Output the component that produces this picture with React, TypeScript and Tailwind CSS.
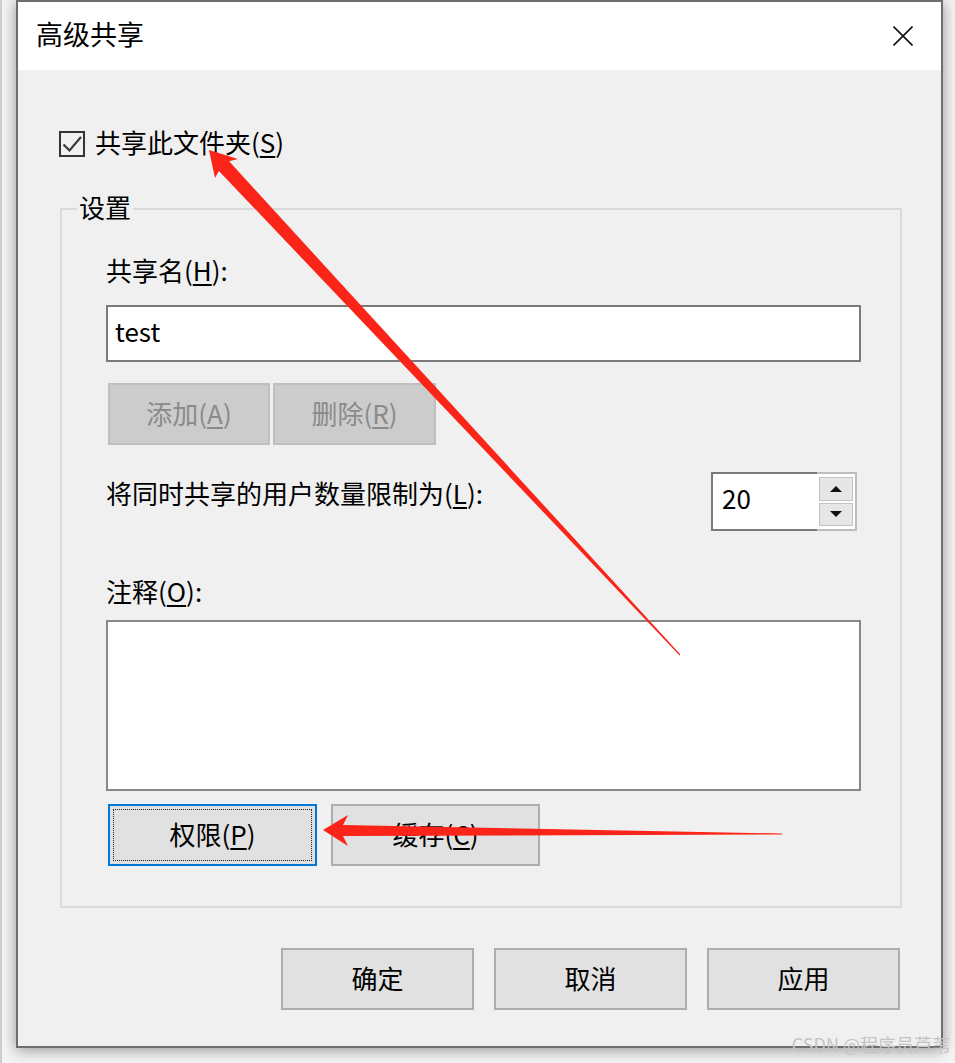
import React from 'react';

const Key: React.FC<{ k: string }> = ({ k }) => (
  <span className="underline underline-offset-[3px] decoration-[1.5px]">{k}</span>
);

const Button: React.FC<{ children: React.ReactNode; className?: string }> = ({ children, className = '' }) => (
  <div className={`h-[62px] flex items-center justify-center pb-[4px] bg-[#e1e1e1] border-2 border-[#adadad] ${className}`}>
    {children}
  </div>
);

const App: React.FC = () => {
  return (
    <div className="relative w-[955px] h-[1063px] overflow-hidden bg-[#f4f4f4] border-l-2 border-[#cdcdcd] pl-[14px] font-['Noto_Sans_CJK_SC',sans-serif] text-black">
      {/* Dialog */}
      <div className="w-[927px] h-[1048px] border-2 border-[#6e6e6e] bg-[#f0f0f0] flex flex-col shadow-[0_2px_14px_rgba(0,0,0,0.4)]">
        {/* Title bar */}
        <div className="h-[68px] bg-white flex items-center justify-between pl-[18px] pr-[28px]">
          <span className="text-[27px] leading-[34px] pb-[4px]">高级共享</span>
          <svg width="20" height="20" viewBox="0 0 20 20">
            <path d="M0.5 0.5 L19.5 19.5 M19.5 0.5 L0.5 19.5" stroke="#111" strokeWidth="1.6" />
          </svg>
        </div>

        {/* Body */}
        <div className="flex-1 flex flex-col pt-[58px]">
          <div className="ml-[41px] h-[32px] flex items-center gap-[10px]">
            <div className="w-[26px] h-[26px] border-2 border-[#333] bg-[#f0f0f0] flex items-center justify-center">
              <svg width="22" height="22" viewBox="0 0 22 22">
                <path d="M2.5 11.5 L8.5 17.5 L20 4" fill="none" stroke="#3a3a3a" strokeWidth="2.2" />
              </svg>
            </div>
            <span className="text-[26px] leading-[32px] pb-[5px]">共享此文件夹(<Key k="S" />)</span>
          </div>

          {/* Settings group */}
          <div className="relative mt-[48px] ml-[42px] mr-[39px] border-2 border-[#dadada] pl-[44px] pr-[39px] pt-[44px] pb-[40px]">
            <span className="absolute left-[15px] -top-[19px] px-[2px] bg-[#f0f0f0] text-[26px] leading-[32px]">设置</span>

            <div className="text-[26px] leading-[32px]">共享名(<Key k="H" />):</div>
            <div className="mt-[19px] h-[57px] border-2 border-[#7a7a7a] bg-white flex items-center pl-[7px] pb-[6px] text-[26px]">
              test
            </div>

            <div className="mt-[21px] ml-[2px] flex gap-[3px]">
              <div className="w-[162px] h-[62px] flex items-center justify-center pb-[4px] bg-[#cccccc] border-2 border-[#bfbfbf] text-[26px] text-[#8a8a8a]">
                添加(<Key k="A" />)
              </div>
              <div className="w-[163px] h-[62px] flex items-center justify-center pb-[4px] bg-[#cccccc] border-2 border-[#bfbfbf] text-[26px] text-[#8a8a8a]">
                删除(<Key k="R" />)
              </div>
            </div>

            <div className="mt-[27px] flex justify-between items-start pr-[4px]">
              <span className="mt-[5px] text-[26px] leading-[32px]">将同时共享的用户数量限制为(<Key k="L" />):</span>
              <div className="flex h-[59px] w-[146px]">
                <div className="flex-1 border-2 border-r-0 border-[#7a7a7a] bg-white flex items-center pl-[9px] pb-[8px] text-[26px]">
                  20
                </div>
                <div className="w-[40px] border-2 border-l-0 border-[#bdbdbd] bg-white pl-[2px] pr-[2px] py-[3px] flex flex-col gap-[2px]">
                  <div className="flex-1 bg-[#e6e6e6] border border-[#c2c2c2] flex items-center justify-center">
                    <svg width="12" height="6" viewBox="0 0 12 6">
                      <path d="M6 0 L12 6 L0 6 Z" fill="#111" />
                    </svg>
                  </div>
                  <div className="flex-1 bg-[#e6e6e6] border border-[#c2c2c2] flex items-center justify-center">
                    <svg width="12" height="6" viewBox="0 0 12 6">
                      <path d="M0 0 L12 0 L6 6 Z" fill="#111" />
                    </svg>
                  </div>
                </div>
              </div>
            </div>

            <div className="mt-[44px] text-[26px] leading-[32px]">注释(<Key k="O" />):</div>
            <div className="mt-[13px] h-[171px] border-2 border-[#888] bg-white" />

            <div className="mt-[13px] ml-[2px] flex gap-[14px]">
              <div className="w-[209px] h-[62px] border-2 border-[#0078d7] bg-[#e1e1e1] p-[3px]">
                <div className="h-full border-[1.5px] border-dotted border-[#222] flex items-center justify-center pb-[3px] text-[26px]">
                  权限(<Key k="P" />)
                </div>
              </div>
              <Button className="w-[209px] text-[26px]">
                <span>
                  缓存(<Key k="C" />)
                </span>
              </Button>
            </div>
          </div>

          {/* Footer buttons */}
          <div className="mt-[40px] flex justify-end gap-[20px] pr-[41px]">
            <Button className="w-[193px] text-[26px]">确定</Button>
            <Button className="w-[193px] text-[26px]">取消</Button>
            <Button className="w-[193px] text-[26px]">应用</Button>
          </div>
        </div>
      </div>

      {/* Annotation arrows */}
      <svg className="absolute inset-0 pointer-events-none" width="955" height="1063" viewBox="0 0 955 1063">
        <polygon
          points="207,150 236,159 227.1,161.3 678.4,654.6 677.6,655.4 216.9,170.9 213,178"
          fill="#fb2418"
        />
        <polygon
          points="321,830 346,815 341,825 780,833.5 780,834.5 341,836 346,846"
          fill="#fb2418"
        />
      </svg>

      {/* Watermark */}
      <span className="absolute right-[5px] top-[1032px] text-[18px] leading-[24px] text-[#c4c4c4]">CSDN @程序员芦苇</span>
    </div>
  );
};

export default App;
